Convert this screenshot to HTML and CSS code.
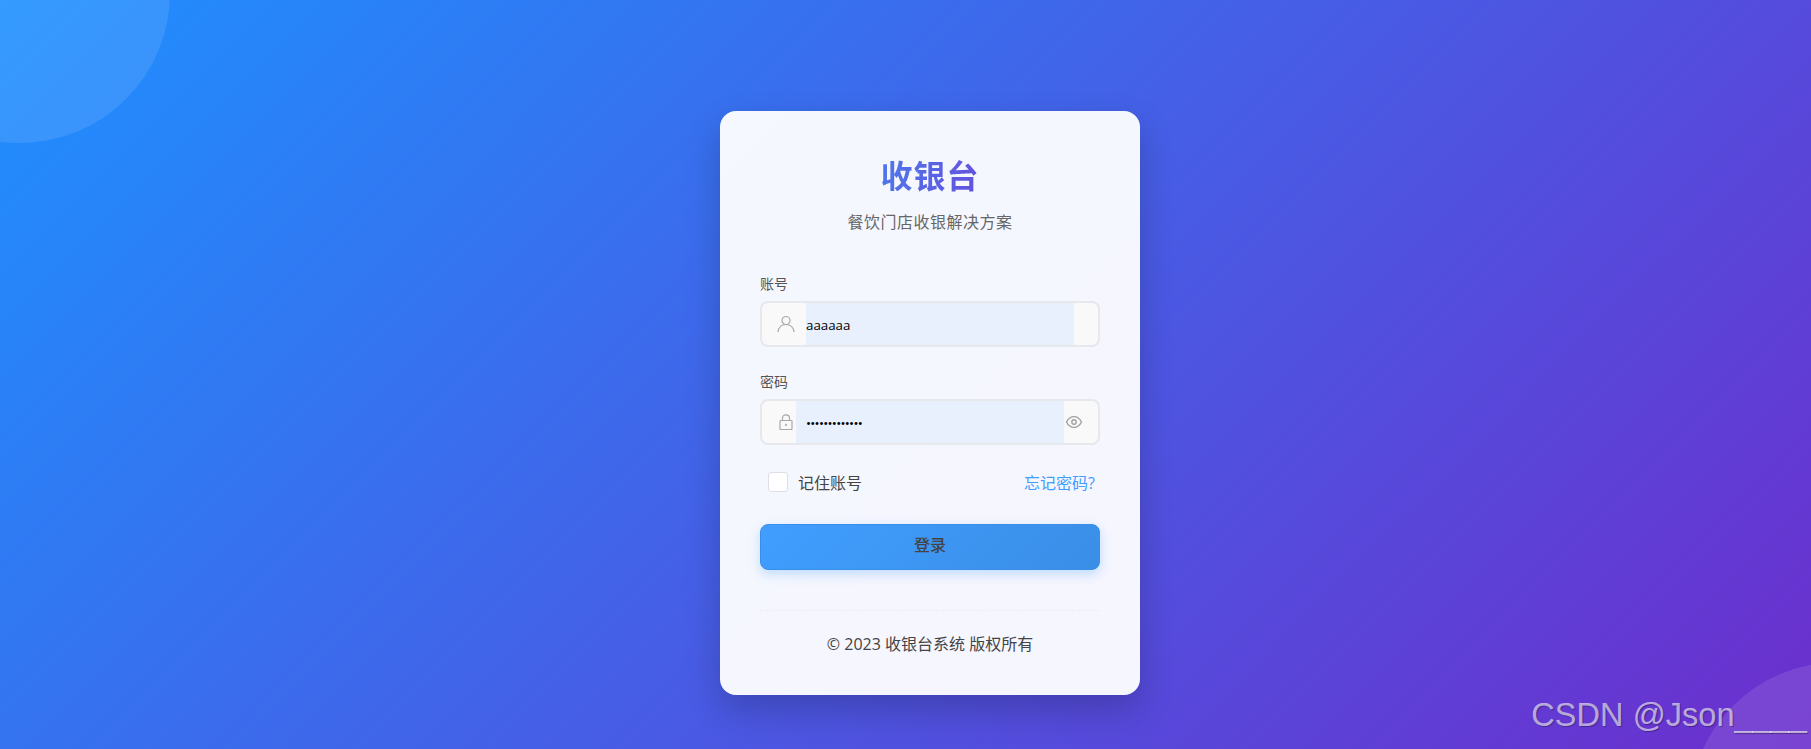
FILE: index.html
```html
<!DOCTYPE html>
<html lang="zh-CN">
<head>
    <meta charset="UTF-8">
    <meta name="viewport" content="width=device-width, initial-scale=1.0">
    <title>收银台</title>
    <link rel="stylesheet" href="styles.css">
</head>
<body>
    <div class="page">
        <div class="circle circle-top"></div>
        <div class="circle circle-bottom"></div>

        <div class="login-card">
            <div class="login-header">
                <h1 class="title">收银台</h1>
                <p class="subtitle">餐饮门店收银解决方案</p>
            </div>

            <form class="login-form">
                <div class="form-item">
                    <label class="form-label">账号</label>
                    <div class="input-wrap">
                        <span class="prefix prefix-wide">
                            <svg width="18" height="18" viewBox="0 0 18 18" fill="none" stroke="#a8a8a8" stroke-width="1.2">
                                <circle cx="9" cy="5.500" r="4"/>
                                <path d="M1 17c.5-4.600 3.700-7.500 8-7.500s7.500 2.900 8 7.500"/>
                            </svg>
                        </span>
                        <input class="input input-flush" type="text" value="aaaaaa">
                        <span class="suffix suffix-narrow"></span>
                    </div>
                </div>

                <div class="form-item">
                    <label class="form-label">密码</label>
                    <div class="input-wrap">
                        <span class="prefix">
                            <svg width="14" height="16" viewBox="0 0 14 16" fill="none" stroke="#a8a8a8" stroke-width="1.2">
                                <path d="M3.500 6.500V4C3.500 2 5 .8 7 .8s3.500 1.200 3.500 3.200v2.500"/>
                                <rect x="1" y="6.500" width="12" height="9" rx=".8"/>
                                <path d="M7 9.800v2.200" stroke-width="1.600"/>
                            </svg>
                        </span>
                        <input class="input input-password" type="password" value="1234567890123">
                        <span class="suffix">
                            <svg width="18" height="14" viewBox="0 0 18 14" fill="none" stroke="#a0a0a0" stroke-width="1.400">
                                <path d="M1.500 7c1.800-3.600 4.400-5.400 7.500-5.400s5.700 1.800 7.500 5.400c-1.800 3.600-4.400 5.400-7.500 5.400S3.300 10.600 1.500 7z"/>
                                <circle cx="9" cy="7" r="2.200"/>
                            </svg>
                        </span>
                    </div>
                </div>

                <div class="form-options">
                    <label class="remember">
                        <span class="checkbox"></span>
                        记住账号
                    </label>
                    <a class="forgot" href="#">忘记密码?</a>
                </div>

                <button class="login-btn" type="button">登录</button>
            </form>

            <div class="login-footer">© 2023 收银台系统 版权所有</div>
        </div>

        <div class="watermark">CSDN @Json____</div>
    </div>
</body>
</html>
```

FILE: styles.css
```css
* {
    margin: 0;
    padding: 0;
    box-sizing: border-box;
}
body {
    font-family: "Open Sans", "Noto Sans CJK SC", sans-serif;
}
.page {
    position: relative;
    display: flex;
    justify-content: center;
    align-items: flex-start;
    height: 100vh;
    padding: 111px 0 0 49px;
    overflow: hidden;
    background: linear-gradient(135deg, #1e90ff, #6c2ecd);
}
.circle {
    position: absolute;
    width: 300px;
    height: 300px;
    border-radius: 50%;
    background-color: rgba(255, 255, 255, 0.1);
}
.circle-top {
    top: -157px;
    left: -130px;
}
.circle-bottom {
    top: 662px;
    left: 1689px;
}
.login-card {
    position: relative;
    width: 420px;
    height: 584px;
    padding: 40px;
    background-color: rgba(255, 255, 255, 0.95);
    border-radius: 16px;
    box-shadow: 0 15px 35px rgba(0, 0, 0, 0.2);
}
.login-header {
    text-align: center;
    margin-bottom: 40px;
}
.title {
    width: fit-content;
    margin: 2px auto 11px;
    font-size: 32px;
    font-weight: 700;
    line-height: 46px;
    letter-spacing: 1px;
    background: linear-gradient(100deg, #4f78ea, #6450de);
    -webkit-background-clip: text;
    background-clip: text;
    color: transparent;
}
.subtitle {
    font-size: 16px;
    line-height: 24px;
    letter-spacing: 0.5px;
    color: #666;
}
.form-item {
    margin-bottom: 25px;
}
.form-label {
    display: block;
    font-size: 14px;
    line-height: 20px;
    color: #555;
    margin-bottom: 7px;
}
.input-wrap {
    display: flex;
    height: 46px;
    border: 2px solid #e6e8ee;
    border-radius: 8px;
    background-color: #f9f9f9;
    overflow: hidden;
}
.prefix {
    width: 34px;
    padding-left: 17px;
    display: flex;
    align-items: center;
    flex-shrink: 0;
}
.prefix-wide {
    width: 44px;
    padding-left: 15px;
}
.suffix {
    width: 34px;
    padding-left: 1px;
    display: flex;
    align-items: center;
    flex-shrink: 0;
}
.suffix-narrow {
    width: 24px;
}
.input {
    flex: 1;
    min-width: 0;
    border: none;
    outline: none;
    padding: 2px 0 0 10px;
    font-family: inherit;
    font-size: 13.33px;
    color: #000;
    background-color: #e8f0fe;
}
.input-flush {
    padding-left: 0;
}
.input-password {
    letter-spacing: -0.7px;
}
.form-options {
    display: flex;
    justify-content: space-between;
    align-items: center;
    height: 24px;
    padding: 0 5px 0 8px;
    margin-bottom: 30px;
    font-size: 16px;
}
.remember {
    display: flex;
    align-items: center;
    gap: 10px;
    color: #444;
}
.checkbox {
    width: 20px;
    height: 20px;
    background-color: #fff;
    border: 1px solid #dcdfe6;
    border-radius: 3px;
}
.forgot {
    color: #409eff;
    text-decoration: none;
}
.login-btn {
    display: block;
    width: 100%;
    height: 46px;
    padding-bottom: 6px;
    border: 1px solid #3a8ee6;
    border-radius: 8px;
    background: linear-gradient(135deg, #409eff, #3a8ee6);
    box-shadow: 0 4px 12px rgba(64, 158, 255, 0.3);
    font-family: inherit;
    font-size: 16px;
    font-weight: 500;
    color: #444;
}
.login-footer {
    margin-top: 40px;
    padding-top: 21px;
    border-top: 1px dashed #eee;
    text-align: center;
    font-size: 16px;
    line-height: 24px;
    color: #444;
}
.watermark {
    position: absolute;
    right: 4px;
    bottom: 15px;
    font-family: "Liberation Sans", Arial, sans-serif;
    font-size: 32.6px;
    line-height: 38px;
    color: rgba(255, 255, 255, 0.62);
    text-shadow: 1px 1px 1px rgba(0, 0, 0, 0.3);
}
```
